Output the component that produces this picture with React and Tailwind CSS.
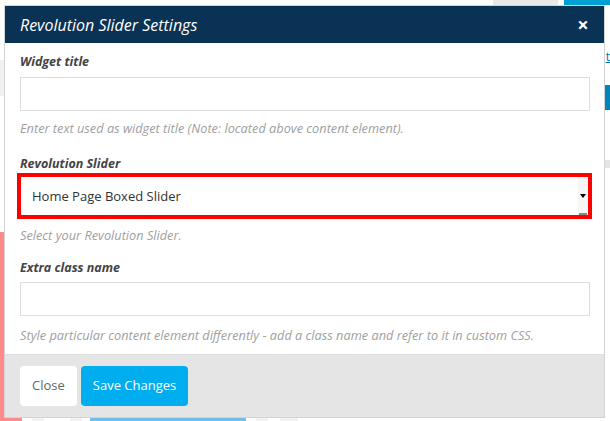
export default function App() {
  const font = { fontFamily: '"Open Sans", "Liberation Sans", sans-serif' };

  return (
    <div className="flex w-[610px] h-[421px] flex-col overflow-hidden bg-white" style={font}>
      {/* strip of the page above the modal */}
      <div className="flex h-[5px] shrink-0">
        <div className="w-[493px] bg-white" />
        <div className="w-[65px] bg-[#e8e8e8]" />
        <div className="w-[6px] bg-white" />
        <div className="flex-1 bg-[#00a0d2]" />
      </div>

      <div className="flex">
        {/* page at the left edge */}
        <div className="flex w-[4px] flex-col">
          <div className="h-[55px]" />
          <div className="h-[36px] bg-[#f1f1f1]" />
          <div className="h-[136px]" />
          <div className="flex-1 bg-[#ff8a8a]" />
        </div>

        {/* modal */}
        <div className="w-[601px] border border-[#d4d4d4] bg-white">
          <div className="flex h-[37px] items-center justify-between bg-[#0a3254] pl-[15px] pr-[15px]">
            <span className="text-[16px] italic leading-[20px] text-white">Revolution Slider Settings</span>
            <span className="text-[20px] font-bold leading-[20px] text-white">×</span>
          </div>

          <div className="pl-[15px] pr-[14px] pt-[10px] pb-[10px]">
            <div className="text-[12.5px] font-bold italic leading-[18px] text-[#444]">Widget title</div>
            <div className="mt-[6px] h-[34px] border border-[#ddd] bg-white" />
            <div className="mt-[9px] text-[12.75px] italic leading-[17px] text-[#a0a0a0]">
              Enter text used as widget title (Note: located above content element).
            </div>

            <div className="mt-[18px] text-[12.5px] font-bold italic leading-[18px] text-[#444]">Revolution Slider</div>
            <div className="-ml-[3px] -mr-[2px] border-[4px] border-[#ff0000]">
              <div className="flex h-[38px] items-center justify-between bg-white pl-[11px]">
                <span className="text-[13px] leading-[18px] text-[#333]">Home Page Boxed Slider</span>
                <div className="relative flex h-full w-[10px] items-center justify-center bg-[#f6f6f6]">
                  <span className="block h-0 w-0 border-x-[3px] border-t-[4px] border-x-transparent border-t-black" />
                  <span className="absolute bottom-0 left-[1px] h-[2px] w-[8px] bg-[#888]" />
                </div>
              </div>
            </div>
            <div className="mt-[8px] text-[12.75px] italic leading-[17px] text-[#a0a0a0]">Select your Revolution Slider.</div>

            <div className="mt-[15px] text-[12.5px] font-bold italic leading-[18px] text-[#444]">Extra class name</div>
            <div className="mt-[5px] h-[34px] border border-[#ddd] bg-white" />
            <div className="mt-[11px] text-[12.75px] italic leading-[17px] text-[#a0a0a0]">
              Style particular content element differently - add a class name and refer to it in custom CSS.
            </div>
          </div>

          <div className="flex gap-[4px] border-t border-[#ddd] bg-[#e5e5e5] pl-[15px] py-[11px]">
            <button className="h-[40px] rounded-[4px] bg-white px-[12px] text-[13px] text-[#666]">Close</button>
            <button className="h-[40px] rounded-[4px] bg-[#00aeef] px-[12px] text-[13px] text-white">Save Changes</button>
          </div>
        </div>

        {/* page at the right edge */}
        <div className="flex flex-1 flex-col">
          <div className="h-[45px]" />
          <div className="pl-[1px] text-[12px] leading-[14px] text-[#0073aa] underline">t</div>
          <div className="h-[21px]" />
          <div className="h-[25px] bg-[#0085ba]" />
          <div className="h-[50px]" />
          <div className="h-[8px] bg-[#e5e5e5]" />
        </div>
      </div>

      {/* strip of the page below the modal */}
      <div className="flex h-[4px] shrink-0">
        <div className="w-[22px] bg-[#ff8a8a]" />
        <div className="w-[10px]" />
        <div className="w-[12px] bg-[#f1f1f1]" />
        <div className="w-[26px]" />
        <div className="w-[12px] bg-[#f1f1f1]" />
        <div className="w-[8px]" />
        <div className="w-[156px] bg-[#6ec0e6]" />
        <div className="w-[10px]" />
        <div className="w-[12px] bg-[#f1f1f1]" />
        <div className="w-[12px]" />
        <div className="w-[18px] bg-[#f1f1f1]" />
      </div>
    </div>
  );
}
